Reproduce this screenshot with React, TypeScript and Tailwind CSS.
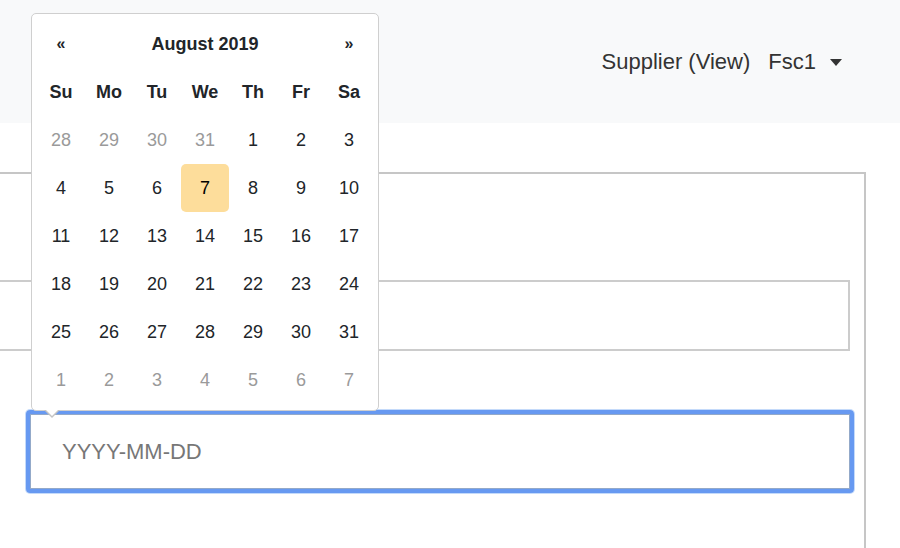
import React from 'react';

const days = ['Su', 'Mo', 'Tu', 'We', 'Th', 'Fr', 'Sa'];

const weeks: { d: number; muted?: boolean; active?: boolean }[][] = [
  [{ d: 28, muted: true }, { d: 29, muted: true }, { d: 30, muted: true }, { d: 31, muted: true }, { d: 1 }, { d: 2 }, { d: 3 }],
  [{ d: 4 }, { d: 5 }, { d: 6 }, { d: 7, active: true }, { d: 8 }, { d: 9 }, { d: 10 }],
  [{ d: 11 }, { d: 12 }, { d: 13 }, { d: 14 }, { d: 15 }, { d: 16 }, { d: 17 }],
  [{ d: 18 }, { d: 19 }, { d: 20 }, { d: 21 }, { d: 22 }, { d: 23 }, { d: 24 }],
  [{ d: 25 }, { d: 26 }, { d: 27 }, { d: 28 }, { d: 29 }, { d: 30 }, { d: 31 }],
  [{ d: 1, muted: true }, { d: 2, muted: true }, { d: 3, muted: true }, { d: 4, muted: true }, { d: 5, muted: true }, { d: 6, muted: true }, { d: 7, muted: true }],
];

const DatePicker = () => {
  return (
    <div className="absolute left-[31px] top-[13px] w-[348px] h-[398px] bg-white border border-[#cfcfcf] rounded-[5px] px-[5px] pt-[6px] z-10">
      {/* arrow */}
      <div className="absolute left-[12px] -bottom-[8px] w-0 h-0 border-l-[8px] border-r-[8px] border-t-[8px] border-l-transparent border-r-transparent border-t-[#c4c4c4]" />
      <div className="absolute left-[13px] -bottom-[6px] w-0 h-0 border-l-[7px] border-r-[7px] border-t-[7px] border-l-transparent border-r-transparent border-t-white" />

      <div className="grid grid-cols-7">
        <div className="h-12 flex items-center justify-center text-[16px] font-bold">«</div>
        <div className="col-span-5 h-12 flex items-center justify-center text-[18px] font-bold">August 2019</div>
        <div className="h-12 flex items-center justify-center text-[16px] font-bold">»</div>
        {days.map((d) => (
          <div key={d} className="h-12 flex items-center justify-center text-[18px] font-bold">
            {d}
          </div>
        ))}
        {weeks.flat().map((c, i) => (
          <div
            key={i}
            className={
              'h-12 flex items-center justify-center text-[18px] rounded-[5px] ' +
              (c.active ? 'bg-[#fddd9b] text-black' : c.muted ? 'text-[#9a9a9a]' : 'text-[#212529]')
            }
          >
            {c.d}
          </div>
        ))}
      </div>
    </div>
  );
};

export default function App() {
  return (
    <div
      className="relative w-[900px] h-[548px] overflow-hidden bg-white text-[#212529]"
      style={{ fontFamily: '"Liberation Sans", Arial, sans-serif' }}
    >
      {/* top navbar */}
      <div className="h-[123px] bg-[#f8f9fa] flex items-center justify-end pr-[58px] text-[22px] text-[#333]">
        <span>Supplier (View)</span>
        <span className="ml-[18px]">Fsc1</span>
        <span className="ml-[14px] mt-[1px] w-0 h-0 border-l-[6px] border-r-[6px] border-t-[7px] border-l-transparent border-r-transparent border-t-[#333]" />
      </div>

      {/* panel */}
      <div className="mt-[49px] -ml-[10px] w-[876px] h-[400px] border-t-2 border-r-2 border-[#c6c6c6]">
        <div className="h-[106px]" />
        <div className="-ml-[10px] w-[870px] h-[71px] border-2 border-[#cccccc]" />
        <div className="ml-[40px] mt-[19px] text-[20px] leading-[22px] text-[#212529]">Date</div>
        <div className="ml-[36px] mt-[18px] w-[828px] h-[83px] rounded-[4px] border-[4px] border-[#6799f1] shadow-[0_0_0_1px_#c4dafa,inset_0_0_0_1px_#93a9c9] flex items-center pl-[32px] text-[22px] text-[#777]">
          YYYY-MM-DD
        </div>
      </div>

      <DatePicker />
    </div>
  );
}
